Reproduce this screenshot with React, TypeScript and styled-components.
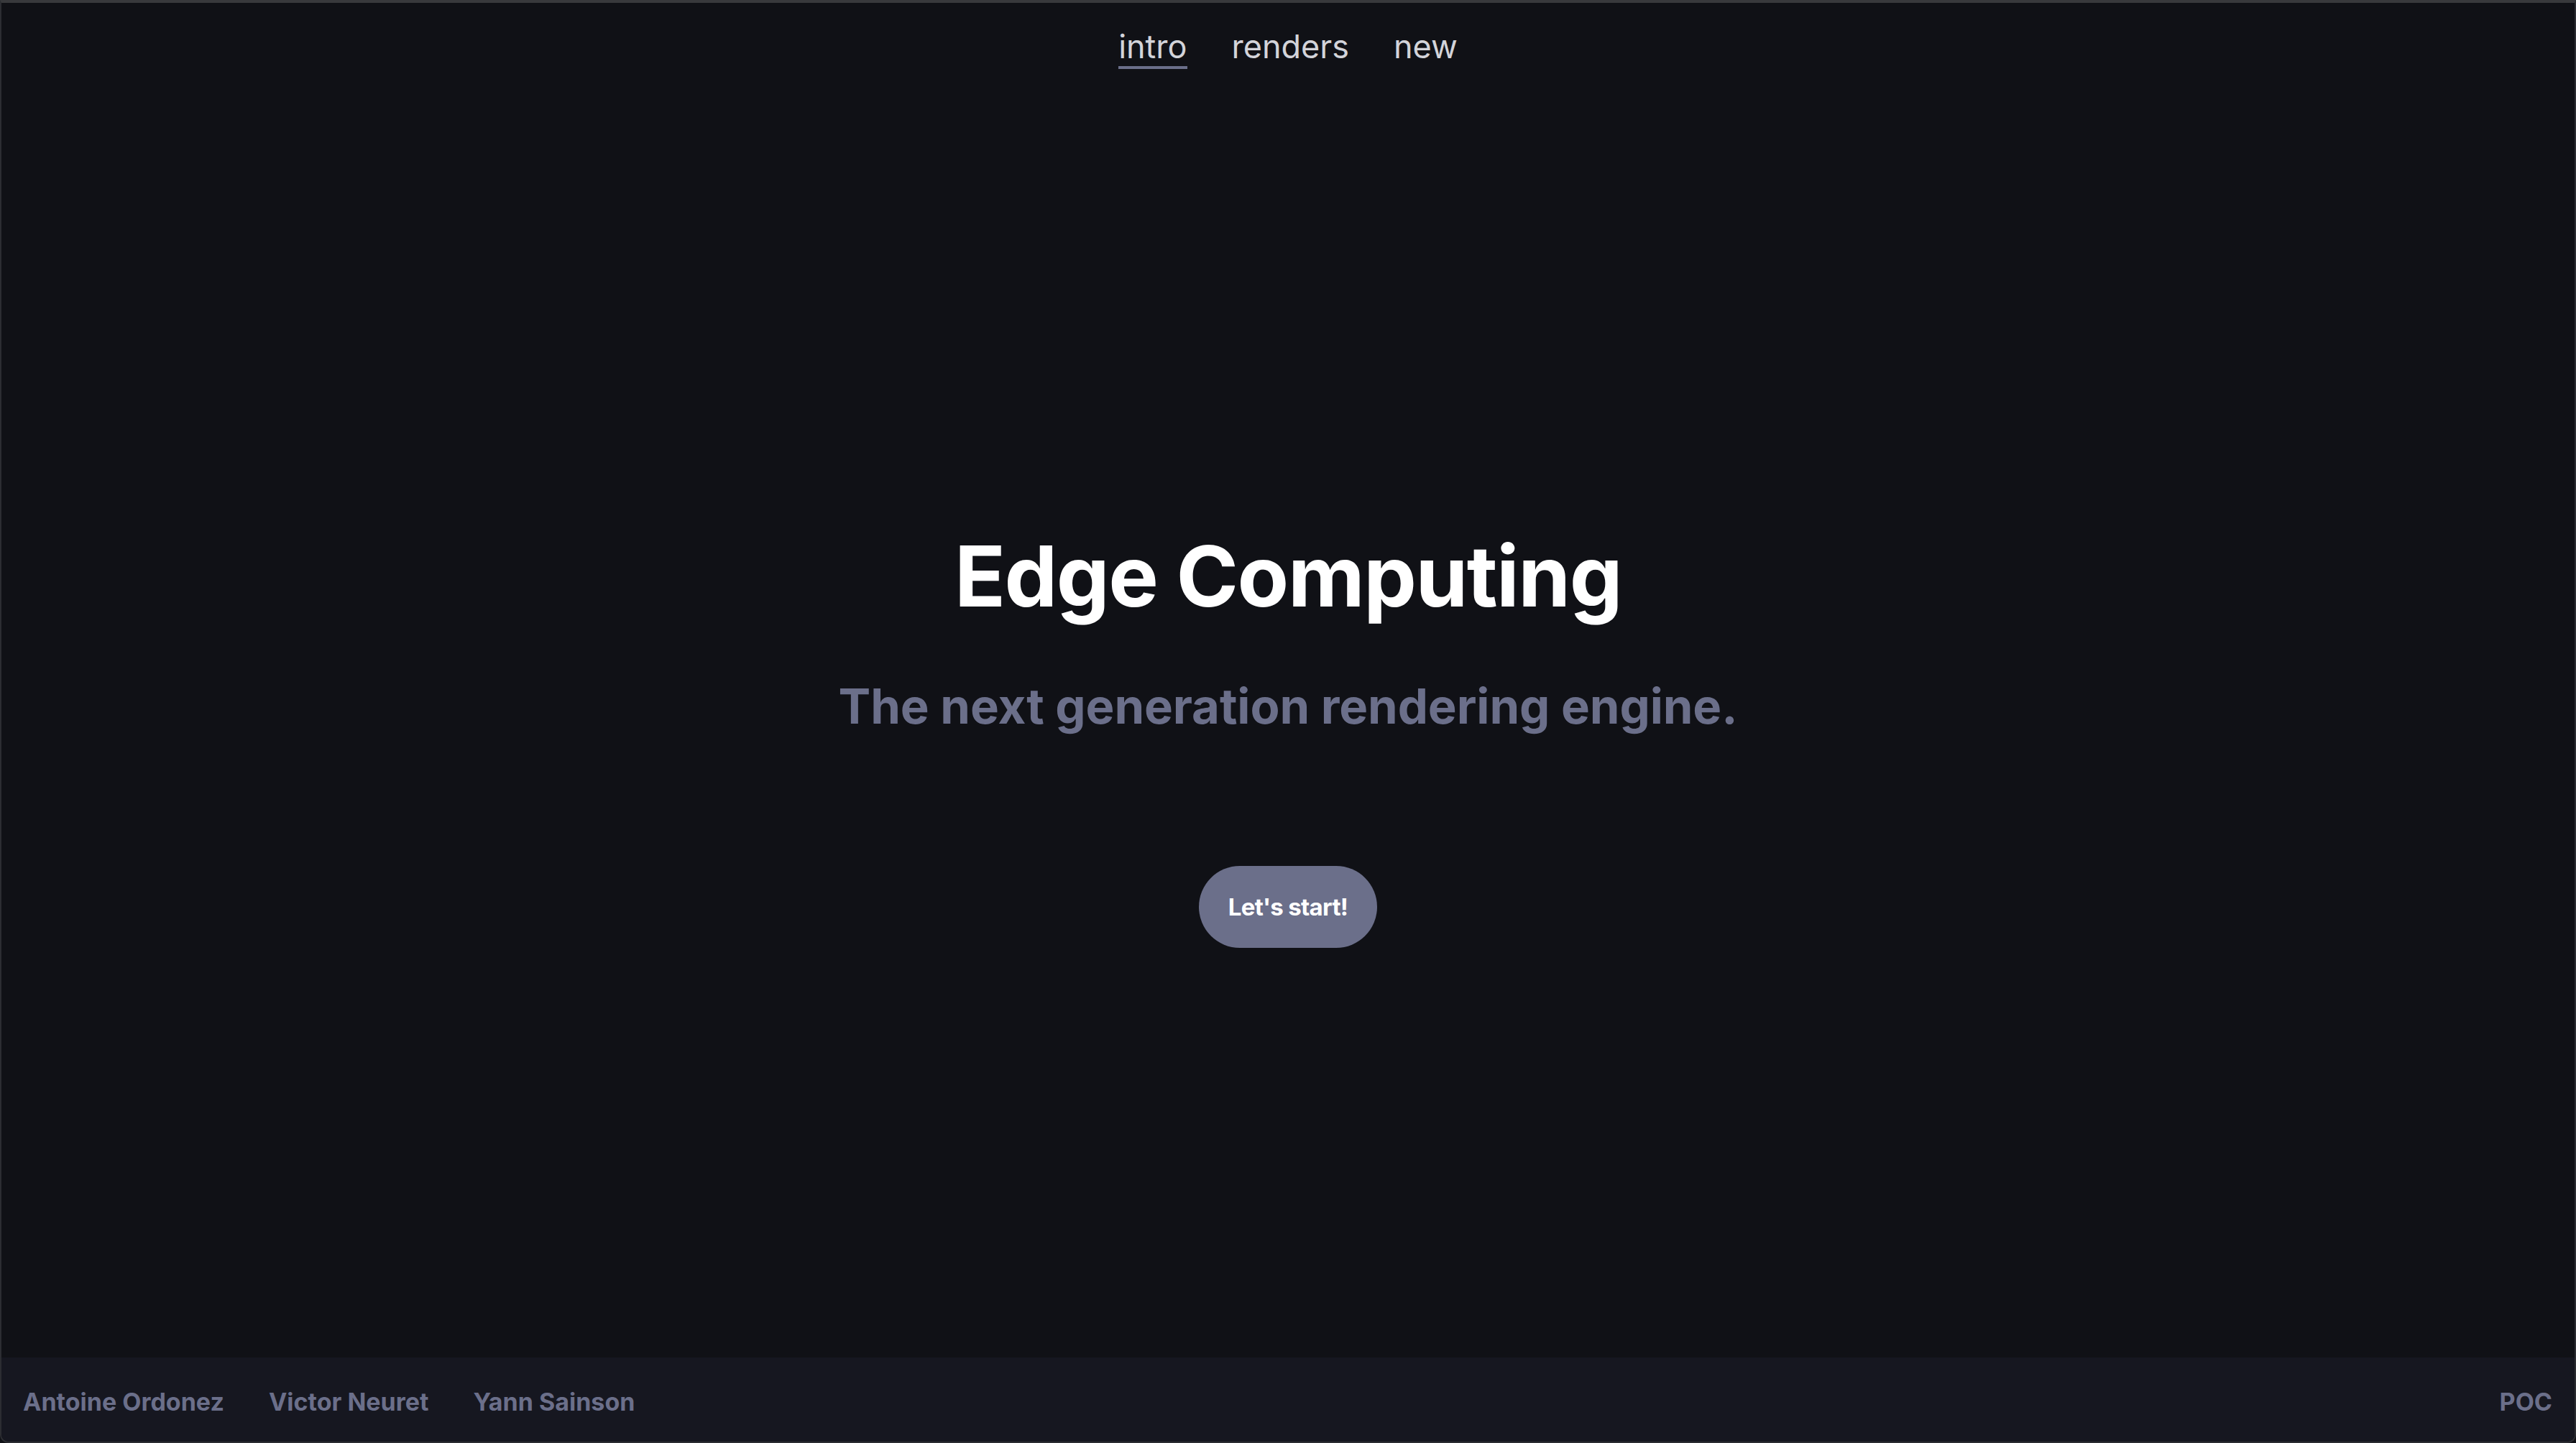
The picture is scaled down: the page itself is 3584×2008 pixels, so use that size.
import React from "react";
import styled, { createGlobalStyle } from "styled-components";

const GlobalStyle = createGlobalStyle`
  html, body {
    margin: 0;
    padding: 0;
    background: #101116;
  }
  body {
    font-family: Inter, "Noto Sans", "Liberation Sans", sans-serif;
  }
  * {
    box-sizing: border-box;
  }
`;

const navItems = ["intro", "renders", "new"];
const authors = ["Antoine Ordonez", "Victor Neuret", "Yann Sainson"];

export default function App() {
  return (
    <>
      <GlobalStyle />
      <Frame>
        <Main>
          <Nav>
            {navItems.map((item, i) => (
              <NavLink key={item} href="#" $active={i === 0}>
                {item}
              </NavLink>
            ))}
          </Nav>
          <Hero>
            <Title>Edge Computing</Title>
            <Subtitle>The next generation rendering engine.</Subtitle>
            <StartButton type="button">Let's start!</StartButton>
          </Hero>
        </Main>
        <Footer>
          <Authors>
            {authors.map((name) => (
              <FooterText key={name}>{name}</FooterText>
            ))}
          </Authors>
          <FooterText>POC</FooterText>
        </Footer>
      </Frame>
    </>
  );
}

const Frame = styled.div`
  height: 100vh;
  display: flex;
  flex-direction: column;
  border: 2px solid #2c2d32;
  border-top: 4px solid #38393c;
  border-radius: 0 0 12px 12px;
  overflow: hidden;
  background: #101116;
`;

const Main = styled.main`
  flex: 1;
  display: flex;
  flex-direction: column;
`;

const Nav = styled.nav`
  display: flex;
  justify-content: center;
  gap: 62px;
  padding-top: 38px;
`;

const NavLink = styled.a<{ $active?: boolean }>`
  font-size: 45px;
  line-height: 1;
  font-weight: 400;
  color: #d3d4da;
  text-decoration: none;
  padding-bottom: 5px;
  border-bottom: 4px solid
    ${(p) => (p.$active ? "#6b6f8a" : "transparent")};
`;

const Hero = styled.section`
  flex: 1;
  display: flex;
  flex-direction: column;
  align-items: center;
  justify-content: center;
  padding-top: 77px;
`;

const Title = styled.h1`
  margin: 0;
  font-size: 117px;
  line-height: 1;
  font-weight: 700;
  color: #ffffff;
  letter-spacing: -1.5px;
`;

const Subtitle = styled.h2`
  margin: 89px 0 0;
  font-size: 67px;
  line-height: 1;
  font-weight: 700;
  color: #6b6f8a;
  letter-spacing: -0.1px;
`;

const StartButton = styled.button`
  margin-top: 189px;
  height: 114px;
  padding: 0 41px;
  border: none;
  border-radius: 57px;
  background: #6b6f8a;
  color: #ffffff;
  font-family: inherit;
  font-size: 33px;
  line-height: 1;
  font-weight: 700;
  letter-spacing: -0.7px;
  cursor: pointer;
`;

const Footer = styled.footer`
  display: flex;
  justify-content: space-between;
  align-items: center;
  padding: 45px 31px 38px 30px;
  background: #161720;
`;

const Authors = styled.div`
  display: flex;
  gap: 62px;
`;

const FooterText = styled.span`
  font-size: 34px;
  line-height: 1;
  font-weight: 700;
  color: #6b6f8a;
`;
